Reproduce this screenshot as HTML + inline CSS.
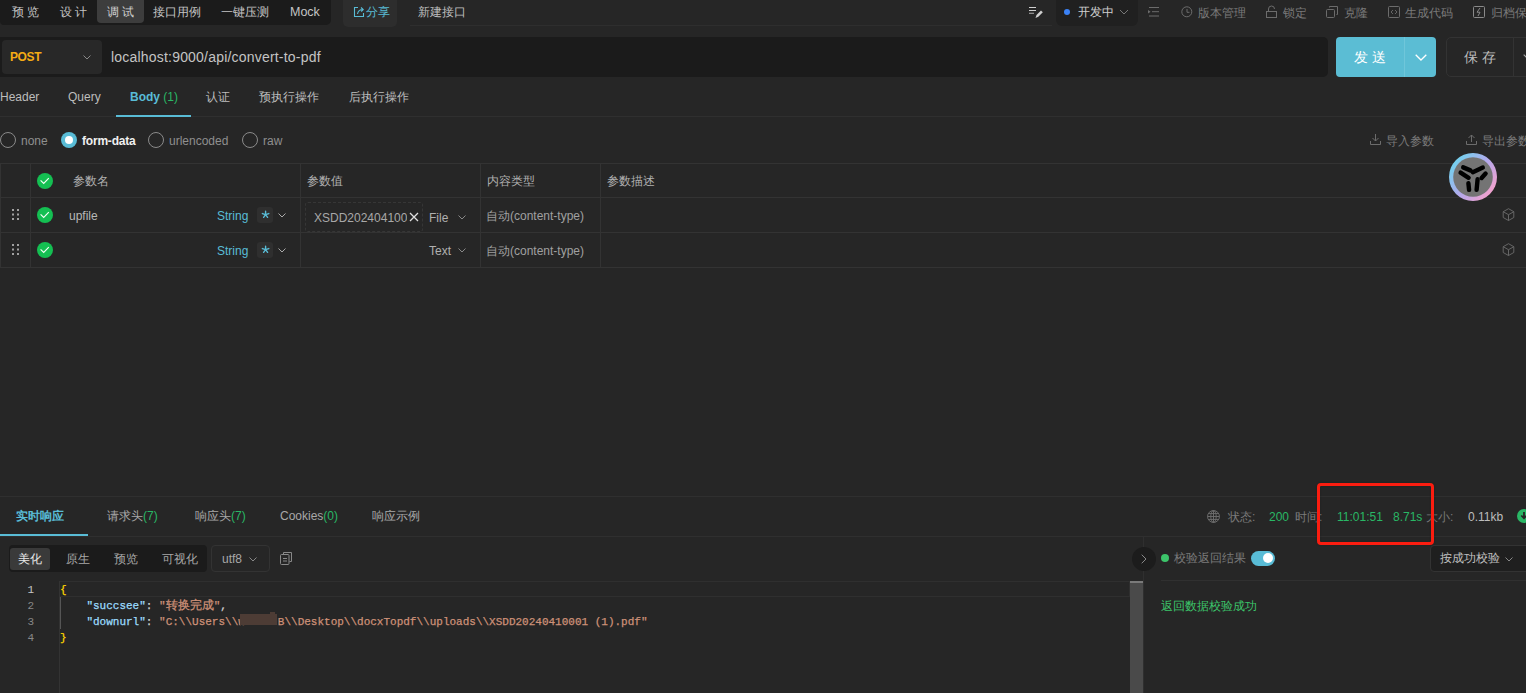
<!DOCTYPE html>
<html><head><meta charset="utf-8">
<style>
*{box-sizing:border-box;margin:0;padding:0}
html,body{width:1526px;height:693px;overflow:hidden;background:#262626;font-family:"Liberation Sans",sans-serif;color:#bdbdbd;font-size:12px}
.a{position:absolute;white-space:nowrap}
.hl{position:absolute;height:1px;background:#333}
.vl{position:absolute;width:1px;background:#333}
.dim{color:#8a8a8a}
.cy{color:#59bcd6}
.gr{color:#29b765}
svg{position:absolute;overflow:visible}
</style></head><body>

<!-- TOP BAR -->
<div class="a" style="left:0;top:0;width:331px;height:24.5px;background:#1b1b1b;border-radius:0 0 5px 4px"></div>
<div class="a" style="left:97px;top:0;width:47px;height:23px;background:#3d3d3d;border-radius:0 0 4px 4px"></div>
<div class="a" style="left:12px;top:4px;font-size:12px;line-height:16px;color:#c4c4c4;letter-spacing:3px">预览</div>
<div class="a" style="left:60px;top:4px;font-size:12px;line-height:16px;color:#c4c4c4;letter-spacing:3px">设计</div>
<div class="a" style="left:107px;top:4px;font-size:12px;line-height:16px;color:#d0d0d0;letter-spacing:3px">调试</div>
<div class="a" style="left:153px;top:4px;font-size:12px;line-height:16px;color:#c4c4c4">接口用例</div>
<div class="a" style="left:221px;top:4px;font-size:12px;line-height:16px;color:#c4c4c4">一键压测</div>
<div class="a" style="left:290px;top:4px;font-size:12.5px;line-height:16px;color:#c4c4c4">Mock</div>

<div class="a" style="left:343px;top:0;width:54px;height:27px;background:#2d2d2d;border-radius:0 0 5px 5px"></div>
<svg style="left:352.5px;top:6px" width="12" height="12" viewBox="0 0 12 12"><path d="M5 1.5H1.5v9h9V7" fill="none" stroke="#59bcd6" stroke-width="1.1"/><path d="M4.5 8C5 5 7 3.5 10 3.5M8 1.5l2.2 2-2 2" fill="none" stroke="#59bcd6" stroke-width="1.1"/></svg>
<div class="a cy" style="left:366px;top:4px;font-size:12px;line-height:16px">分享</div>
<div class="a" style="left:418px;top:4px;font-size:12px;line-height:16px;color:#bdbdbd">新建接口</div>
<div class="hl" style="left:410px;top:25px;width:642px;background:#2e2e2e"></div>

<!-- right top -->
<svg style="left:1029px;top:6px" width="14" height="13" viewBox="0 0 14 13"><path d="M0 1.5h7M0 4.5h7" stroke="#d0d0d0" stroke-width="1.2"/><path d="M0 7.3h5" stroke="#999" stroke-width="1.2"/><path d="M6.5 12l1-3 4.5-4.5 1.8 1.8L9.3 10.8z" fill="#d0d0d0"/></svg>
<div class="a" style="left:1056px;top:0;width:82px;height:25.5px;background:#202020;border-radius:0 0 6px 6px"></div>
<div class="a" style="left:1064px;top:9px;width:6px;height:6px;border-radius:50%;background:#3b82f6"></div>
<div class="a" style="left:1078px;top:4px;font-size:12px;line-height:16px;color:#cfcfcf">开发中</div>
<svg style="left:1119px;top:9px" width="10" height="6" viewBox="0 0 10 6"><path d="M1 1l4 4 4-4" fill="none" stroke="#777" stroke-width="1"/></svg>
<svg style="left:1148px;top:7px" width="12" height="11" viewBox="0 0 12 11"><path d="M1 .5h10M4 4.7h7M1 9h10" stroke="#6c6c6c" stroke-width="1"/><path d="M0 3l2.6 1.7L0 6.4z" fill="#6c6c6c"/></svg>
<svg style="left:1181px;top:6px" width="12" height="12" viewBox="0 0 12 12"><circle cx="5.8" cy="5.8" r="5" fill="none" stroke="#6c6c6c" stroke-width="1"/><path d="M6 3v3.3h2.5" fill="none" stroke="#6c6c6c"/></svg>
<div class="a dim" style="left:1198px;top:5.5px;line-height:15px;color:#7a7a7a">版本管理</div>
<svg style="left:1266px;top:6px" width="11" height="12" viewBox="0 0 11 12"><rect x="0.5" y="5.5" width="10" height="6" fill="none" stroke="#6c6c6c"/><path d="M2.5 5.5V3a3 3 0 0 1 6 0" fill="none" stroke="#6c6c6c"/></svg>
<div class="a dim" style="left:1283px;top:5.5px;line-height:15px;color:#7a7a7a">锁定</div>
<svg style="left:1326px;top:6px" width="12" height="12" viewBox="0 0 12 12"><rect x="0.5" y="3.5" width="8" height="8" rx="1" fill="none" stroke="#6c6c6c"/><path d="M3.5 1.5V.5h8v8h-1" fill="none" stroke="#6c6c6c"/></svg>
<div class="a dim" style="left:1344px;top:5.5px;line-height:15px;color:#7a7a7a">克隆</div>
<svg style="left:1388px;top:6px" width="12" height="12" viewBox="0 0 12 12"><rect x="0.5" y="0.5" width="11" height="11" rx="1" fill="none" stroke="#6c6c6c"/><path d="M5 4L3 6l2 2M7 4l2 2-2 2" fill="none" stroke="#6c6c6c" stroke-width=".9"/></svg>
<div class="a dim" style="left:1405px;top:5.5px;line-height:15px;color:#7a7a7a">生成代码</div>
<svg style="left:1473px;top:6px" width="12" height="12" viewBox="0 0 12 12"><rect x="0.5" y="0.5" width="11" height="11" rx="1" fill="none" stroke="#8a8a8a"/><path d="M7 2L4 6.2h3L5 10" fill="none" stroke="#8a8a8a" stroke-width="1"/></svg>
<div class="a dim" style="left:1491px;top:5.5px;line-height:15px;color:#7a7a7a">归档保存</div>

<!-- URL BAR -->
<div class="a" style="left:0;top:37px;width:1328px;height:40px;background:#1b1b1b;border-radius:0 5px 5px 0"></div>
<div class="a" style="left:2px;top:40px;width:100px;height:34px;background:#282828;border-radius:4px"></div>
<div class="a" style="left:10px;top:50px;font-size:12px;line-height:15px;font-weight:bold;color:#f5ac14;letter-spacing:-.4px">POST</div>
<svg style="left:83px;top:55px" width="8" height="5" viewBox="0 0 8 5"><path d="M.5.5l3.5 3.5 3.5-3.5" fill="none" stroke="#888" stroke-width="1"/></svg>
<div class="a" style="left:111px;top:49px;font-size:14px;line-height:16px;color:#c4c4c4;letter-spacing:.2px">localhost:9000/api/convert-to-pdf</div>

<div class="a" style="left:1336px;top:37px;width:100px;height:40px;background:#5bbdd4;border-radius:4px"></div>
<div class="vl" style="left:1404px;top:37px;height:40px;background:#6fc6da"></div>
<div class="a" style="left:1354px;top:47.5px;font-size:14px;line-height:18px;color:#fff;letter-spacing:4px">发送</div>
<svg style="left:1415px;top:54px" width="12" height="7" viewBox="0 0 12 7"><path d="M.7.7L6 6 11.3.7" fill="none" stroke="#fff" stroke-width="1.3"/></svg>
<div class="a" style="left:1446px;top:37px;width:90px;height:40px;border:1px solid #333;border-radius:5px;background:#262626"></div>
<div class="vl" style="left:1513px;top:38px;height:38px"></div>
<svg style="left:1523px;top:54px" width="9" height="6" viewBox="0 0 9 6"><path d="M.7.7L4.5 4.5 8.3.7" fill="none" stroke="#aaa" stroke-width="1.1"/></svg>
<div class="a" style="left:1464px;top:47.5px;font-size:14px;line-height:18px;color:#bdbdbd;letter-spacing:4px">保存</div>

<!-- REQ TABS -->
<div class="a" style="left:0;top:89px;font-size:12px;line-height:16px;color:#bdbdbd">Header</div>
<div class="a" style="left:68px;top:89px;font-size:12px;line-height:16px;color:#bdbdbd">Query</div>
<div class="a" style="left:130px;top:89px;font-size:12px;line-height:16px;color:#59bcd6;font-weight:bold">Body <span class="gr" style="font-weight:normal">(1)</span></div>
<div class="a" style="left:206px;top:89px;font-size:12px;line-height:16px;color:#bdbdbd">认证</div>
<div class="a" style="left:259px;top:89px;font-size:12px;line-height:16px;color:#bdbdbd">预执行操作</div>
<div class="a" style="left:349px;top:89px;font-size:12px;line-height:16px;color:#bdbdbd">后执行操作</div>
<div class="hl" style="left:0;top:116px;width:1526px;background:#2f2f2f"></div>
<div class="a" style="left:116px;top:115px;width:75px;height:2px;background:#59bcd6"></div>


<!-- RADIO ROW -->
<div class="a" style="left:0;top:132px;width:16px;height:16px;border:1px solid #8a8a8a;border-radius:50%"></div>
<div class="a" style="left:21px;top:134px;font-size:12px;line-height:15px;color:#8f8f8f">none</div>
<div class="a" style="left:61px;top:132px;width:16px;height:16px;border-radius:50%;background:#59bcd6"></div>
<div class="a" style="left:65px;top:136px;width:8px;height:8px;border-radius:50%;background:#fff"></div>
<div class="a" style="left:82px;top:134px;font-size:12px;line-height:15px;color:#f0f0f0;font-weight:bold;letter-spacing:-.2px">form-data</div>
<div class="a" style="left:148px;top:132px;width:16px;height:16px;border:1px solid #8a8a8a;border-radius:50%"></div>
<div class="a" style="left:169px;top:134px;font-size:12px;line-height:15px;color:#8f8f8f">urlencoded</div>
<div class="a" style="left:242px;top:132px;width:16px;height:16px;border:1px solid #8a8a8a;border-radius:50%"></div>
<div class="a" style="left:263px;top:134px;font-size:12px;line-height:15px;color:#8f8f8f">raw</div>

<svg style="left:1370px;top:134px" width="11" height="11" viewBox="0 0 11 11"><path d="M5.5 0v7M2.5 4l3 3 3-3M.5 7v3.5h10V7" fill="none" stroke="#6c6c6c"/></svg>
<div class="a" style="left:1386px;top:134px;line-height:15px;color:#7a7a7a">导入参数</div>
<svg style="left:1466px;top:134px" width="11" height="11" viewBox="0 0 11 11"><path d="M5.5 8V1M2.5 4l3-3 3 3M.5 7v3.5h10V7" fill="none" stroke="#6c6c6c"/></svg>
<div class="a" style="left:1482px;top:134px;line-height:15px;color:#7a7a7a">导出参数</div>

<!-- TABLE -->
<div class="hl" style="left:0;top:163px;width:1526px"></div>
<div class="hl" style="left:0;top:197px;width:1526px"></div>
<div class="hl" style="left:0;top:232px;width:1526px"></div>
<div class="hl" style="left:0;top:267px;width:1526px"></div>
<div class="vl" style="left:0;top:163px;height:105px"></div>
<div class="vl" style="left:30px;top:163px;height:105px"></div>
<div class="vl" style="left:300px;top:163px;height:105px"></div>
<div class="vl" style="left:480px;top:163px;height:105px"></div>
<div class="vl" style="left:600px;top:163px;height:105px"></div>

<svg style="left:37px;top:173px" width="16" height="16" viewBox="0 0 16 16"><circle cx="8" cy="8" r="8" fill="#14bf52"/><path d="M3.6 7.4L6.7 10.4 11.8 5.2" fill="none" stroke="#f4fff6" stroke-width="1.15"/></svg>
<svg style="left:37px;top:207px" width="16" height="16" viewBox="0 0 16 16"><circle cx="8" cy="8" r="8" fill="#14bf52"/><path d="M3.6 7.4L6.7 10.4 11.8 5.2" fill="none" stroke="#f4fff6" stroke-width="1.15"/></svg>
<svg style="left:37px;top:242px" width="16" height="16" viewBox="0 0 16 16"><circle cx="8" cy="8" r="8" fill="#14bf52"/><path d="M3.6 7.4L6.7 10.4 11.8 5.2" fill="none" stroke="#f4fff6" stroke-width="1.15"/></svg>

<svg style="left:12px;top:209px" width="8" height="12" viewBox="0 0 8 12"><g fill="#a0a0a0"><rect x="0" y="0" width="2" height="2"/><rect x="5" y="0" width="2" height="2"/><rect x="0" y="4.5" width="2" height="2"/><rect x="5" y="4.5" width="2" height="2"/><rect x="0" y="9" width="2" height="2"/><rect x="5" y="9" width="2" height="2"/></g></svg>
<svg style="left:12px;top:244px" width="8" height="12" viewBox="0 0 8 12"><g fill="#a0a0a0"><rect x="0" y="0" width="2" height="2"/><rect x="5" y="0" width="2" height="2"/><rect x="0" y="4.5" width="2" height="2"/><rect x="5" y="4.5" width="2" height="2"/><rect x="0" y="9" width="2" height="2"/><rect x="5" y="9" width="2" height="2"/></g></svg>

<div class="a" style="left:73px;top:173px;line-height:16px;color:#b0b0b0">参数名</div>
<div class="a" style="left:307px;top:173px;line-height:16px;color:#b0b0b0">参数值</div>
<div class="a" style="left:487px;top:173px;line-height:16px;color:#b0b0b0">内容类型</div>
<div class="a" style="left:607px;top:173px;line-height:16px;color:#b0b0b0">参数描述</div>

<div class="a" style="left:69px;top:209px;line-height:15px;color:#b8b8b8">upfile</div>
<div class="a cy" style="left:217px;top:209px;line-height:15px">String</div>
<div class="a" style="left:257px;top:207px;width:16px;height:16px;background:#2f2f2f;border-radius:3px"></div>
<svg style="left:261.6px;top:210.5px" width="7.2" height="7.2" viewBox="0 0 7.2 7.2"><path d="M3.6 3.6L3.60 0.20M3.6 3.6L6.83 2.55M3.6 3.6L5.60 6.35M3.6 3.6L1.60 6.35M3.6 3.6L0.37 2.55" stroke="#59bcd6" stroke-width="1.4" stroke-linecap="round"/></svg>
<svg style="left:278px;top:212.5px" width="8" height="5" viewBox="0 0 8 5"><path d="M.5.5l3.5 3.5 3.5-3.5" fill="none" stroke="#aaa"/></svg>
<div class="a cy" style="left:217px;top:244px;line-height:15px">String</div>
<div class="a" style="left:257px;top:242px;width:16px;height:16px;background:#2f2f2f;border-radius:3px"></div>
<svg style="left:261.6px;top:245.5px" width="7.2" height="7.2" viewBox="0 0 7.2 7.2"><path d="M3.6 3.6L3.60 0.20M3.6 3.6L6.83 2.55M3.6 3.6L5.60 6.35M3.6 3.6L1.60 6.35M3.6 3.6L0.37 2.55" stroke="#59bcd6" stroke-width="1.4" stroke-linecap="round"/></svg>
<svg style="left:278px;top:247.5px" width="8" height="5" viewBox="0 0 8 5"><path d="M.5.5l3.5 3.5 3.5-3.5" fill="none" stroke="#aaa"/></svg>

<div class="a" style="left:305px;top:202px;width:118px;height:30px;border:1px dashed #363636;border-radius:3px"></div>
<div class="a" style="left:314px;top:211px;width:93px;overflow:hidden;line-height:15px;color:#a8a8a8">XSDD20240410001 (1).docx</div>
<svg style="left:409px;top:211.5px" width="10" height="10" viewBox="0 0 10 10"><path d="M1 1l8 8M9 1L1 9" stroke="#e0e0e0" stroke-width="1.3"/></svg>
<div class="a" style="left:429px;top:211px;line-height:15px;color:#b0b0b0">File</div>
<svg style="left:458px;top:215px" width="8" height="5" viewBox="0 0 8 5"><path d="M.5.5l3.5 3.5 3.5-3.5" fill="none" stroke="#888"/></svg>
<div class="a" style="left:429px;top:244px;line-height:15px;color:#b0b0b0">Text</div>
<svg style="left:458px;top:248px" width="8" height="5" viewBox="0 0 8 5"><path d="M.5.5l3.5 3.5 3.5-3.5" fill="none" stroke="#888"/></svg>
<div class="a" style="left:486px;top:209px;line-height:15px;color:#a0a0a0">自动(content-type)</div>
<div class="a" style="left:486px;top:244px;line-height:15px;color:#a0a0a0">自动(content-type)</div>

<svg style="left:1502px;top:208px" width="13" height="13" viewBox="0 0 13 13"><path d="M6.5 .7l5.3 3v5.8l-5.3 3-5.3-3V3.7zM1.2 3.7l5.3 3 5.3-3M6.5 6.7v5.8" fill="none" stroke="#6c6c6c" stroke-width=".9"/></svg>
<svg style="left:1502px;top:243px" width="13" height="13" viewBox="0 0 13 13"><path d="M6.5 .7l5.3 3v5.8l-5.3 3-5.3-3V3.7zM1.2 3.7l5.3 3 5.3-3M6.5 6.7v5.8" fill="none" stroke="#6c6c6c" stroke-width=".9"/></svg>

<!-- avatar -->
<svg style="left:1449px;top:153px" width="48" height="48" viewBox="0 0 48 48">
<defs><linearGradient id="rg" x1="0.1" y1="0.2" x2="0.9" y2="0.85"><stop offset="0" stop-color="#74d0ee"/><stop offset=".5" stop-color="#b3a9ec"/><stop offset="1" stop-color="#f5a1cc"/></linearGradient></defs>
<circle cx="24" cy="24" r="24" fill="url(#rg)"/><circle cx="24" cy="24" r="19.8" fill="#747474"/>
<g stroke="#000" stroke-width="4.4" stroke-linecap="round" fill="none">
<path d="M14.2 14.4L21.4 17.4"/><path d="M23.8 19.2L33.8 14.6"/><path d="M11.6 19.6L19.6 24.8"/><path d="M32.6 25L36.6 20.6"/><path d="M19.4 30.2L20.1 36.9"/><path d="M28.6 26.2L27.6 36.9"/>
</g>
</svg>

<!-- RESPONSE -->
<div class="hl" style="left:0;top:496px;width:1526px;background:#2f2f2f"></div>
<div class="a cy" style="left:16px;top:508px;font-size:12px;line-height:16px;font-weight:bold">实时响应</div>
<div class="a" style="left:107px;top:508px;line-height:16px;color:#a8a8a8">请求头<span class="gr">(7)</span></div>
<div class="a" style="left:195px;top:508px;line-height:16px;color:#a8a8a8">响应头<span class="gr">(7)</span></div>
<div class="a" style="left:280px;top:508px;line-height:16px;color:#a8a8a8">Cookies<span class="gr">(0)</span></div>
<div class="a" style="left:372px;top:508px;line-height:16px;color:#a8a8a8">响应示例</div>
<div class="hl" style="left:0;top:536px;width:1526px;background:#2f2f2f"></div>
<div class="a" style="left:0;top:534px;width:88px;height:2px;background:#59bcd6"></div>

<div class="a" style="left:1207px;top:510px;width:12px;height:12px"></div>
<svg style="left:1206.5px;top:509.5px" width="13" height="13" viewBox="0 0 12 12"><g fill="none" stroke="#6c6c6c" stroke-width=".9"><circle cx="6" cy="6" r="5.5"/><ellipse cx="6" cy="6" rx="2.5" ry="5.5"/><path d="M.5 6h11M1.3 3.3h9.4M1.3 8.7h9.4M6 .5v11"/></g></svg>
<div class="a" style="left:1228px;top:508.5px;line-height:16px;color:#7a7a7a">状态:</div>
<div class="a gr" style="left:1269px;top:509px;line-height:16px;font-size:12px">200</div>
<div class="a" style="left:1295px;top:508.5px;line-height:16px;color:#7a7a7a">时间:</div>
<div class="a gr" style="left:1337px;top:509px;line-height:16px;font-size:12px">11:01:51</div>
<div class="a gr" style="left:1393px;top:509px;line-height:16px;font-size:12px">8.71s</div>
<div class="a" style="left:1426px;top:508.5px;line-height:16px;color:#7a7a7a">大小:</div>
<div class="a" style="left:1468px;top:509px;line-height:16px;font-size:12px;color:#bdbdbd">0.11kb</div>
<svg style="left:1517px;top:509px" width="14" height="14" viewBox="0 0 14 14"><circle cx="7" cy="7" r="7" fill="#29b765"/><path d="M7 3v6M4.3 6.5L7 9.3 9.7 6.5" fill="none" stroke="#262626" stroke-width="1.8"/></svg>

<div class="a" style="left:1317px;top:482.5px;width:116.5px;height:62px;border:3px solid #fb1d10;border-radius:4px;box-shadow:0 0 1.5px #162020, inset 0 0 1.5px #162020"></div>

<!-- segmented -->
<div class="a" style="left:9px;top:545px;width:198px;height:27px;background:#1b1b1b;border-radius:4px"></div>
<div class="a" style="left:10px;top:548px;width:40px;height:22px;background:#3a3a3a;border-radius:3px"></div>
<div class="a" style="left:18px;top:552px;line-height:15px;color:#e8e8e8">美化</div>
<div class="a" style="left:66px;top:552px;line-height:15px;color:#a8a8a8">原生</div>
<div class="a" style="left:114px;top:552px;line-height:15px;color:#a8a8a8">预览</div>
<div class="a" style="left:162px;top:552px;line-height:15px;color:#a8a8a8">可视化</div>
<div class="a" style="left:211px;top:545px;width:59px;height:27px;border:1px solid #333;border-radius:4px"></div>
<div class="a" style="left:222px;top:552px;line-height:15px;color:#a8a8a8">utf8</div>
<svg style="left:249px;top:557px" width="8" height="5" viewBox="0 0 8 5"><path d="M.5.5l3.5 3.5 3.5-3.5" fill="none" stroke="#888"/></svg>
<svg style="left:280px;top:552px" width="12" height="13" viewBox="0 0 12 13"><path d="M3.5 2.5V.5h8v9h-2" fill="none" stroke="#888"/><rect x=".5" y="2.5" width="8.5" height="10" rx="1" fill="none" stroke="#888"/><path d="M3 6.5h4M3 9h4" stroke="#888"/></svg>

<!-- editor -->
<div class="a" style="left:60px;top:581px;width:1070px;height:16px;border:1px solid #2f2f2f;border-left:none"></div>
<div class="vl" style="left:59px;top:581px;height:112px;background:#333"></div>
<div class="vl" style="left:60px;top:597px;height:32px;background:#555"></div>
<div class="a" style="left:0;top:582px;width:34px;text-align:right;font-family:'Liberation Mono',monospace;font-size:11px;line-height:16px;color:#888">
<span style="color:#c6c6c6">1</span><br>2<br>3<br>4</div>
<div class="a" style="left:60px;top:582px;font-family:'Liberation Mono',monospace;font-size:11px;line-height:16px;color:#d4d4d4;white-space:pre;-webkit-text-stroke:.25px currentColor"><span style="color:#ffd700">{</span>
    <span style="color:#9cdcfe">"succsee"</span>: <span style="color:#ce9178">"<span style="font-size:12px">转换完成</span>"</span>,
    <span style="color:#9cdcfe">"downurl"</span>: <span style="color:#ce9178">"C:\\Users\\w     B\\Desktop\\docxTopdf\\uploads\\XSDD20240410001 (1).pdf"</span>
<span style="color:#ffd700">}</span></div>

<div class="a" style="left:1130px;top:581px;width:13px;height:112px;background:#4a4a4a"></div><div class="a" style="left:1130px;top:581px;width:13px;height:2px;background:#7a7a7a"></div><div class="a" style="left:240px;top:613.5px;width:37px;height:11px;background:#4d3c35"></div><div class="a" style="left:270px;top:612px;width:5px;height:3px;background:#4d3c35"></div>
<div class="vl" style="left:1143px;top:536px;height:157px;background:#2f2f2f"></div>
<div class="a" style="left:1132px;top:547px;width:24px;height:24px;border-radius:50%;background:#1c1c1c"></div>
<svg style="left:1141px;top:554px" width="6" height="10" viewBox="0 0 6 10"><path d="M.7.7L5 5 .7 9.3" fill="none" stroke="#888" stroke-width="1"/></svg>
<div class="a" style="left:1161px;top:554px;width:8px;height:8px;border-radius:50%;background:#3cc46a"></div>
<div class="a" style="left:1174px;top:551px;line-height:15px;color:#7a7a7a">校验返回结果</div>
<div class="a" style="left:1251px;top:551px;width:24px;height:14.5px;border-radius:7.5px;background:#59bcd6"></div>
<div class="a" style="left:1263px;top:553px;width:10px;height:10px;border-radius:50%;background:#fff"></div>
<div class="a" style="left:1429.5px;top:544.5px;width:100px;height:27px;border:1px solid #333;border-radius:4px;background:#1f1f1f"></div>
<div class="a" style="left:1440px;top:551px;line-height:15px;color:#c0c0c0">按成功校验</div>
<svg style="left:1505px;top:557px" width="8" height="5" viewBox="0 0 8 5"><path d="M.5.5l3.5 3.5 3.5-3.5" fill="none" stroke="#888"/></svg>
<div class="hl" style="left:1161px;top:580px;width:365px;background:#303030"></div>
<div class="a" style="left:1161px;top:598px;line-height:16px;color:#3cc46a">返回数据校验成功</div>

</body></html>
